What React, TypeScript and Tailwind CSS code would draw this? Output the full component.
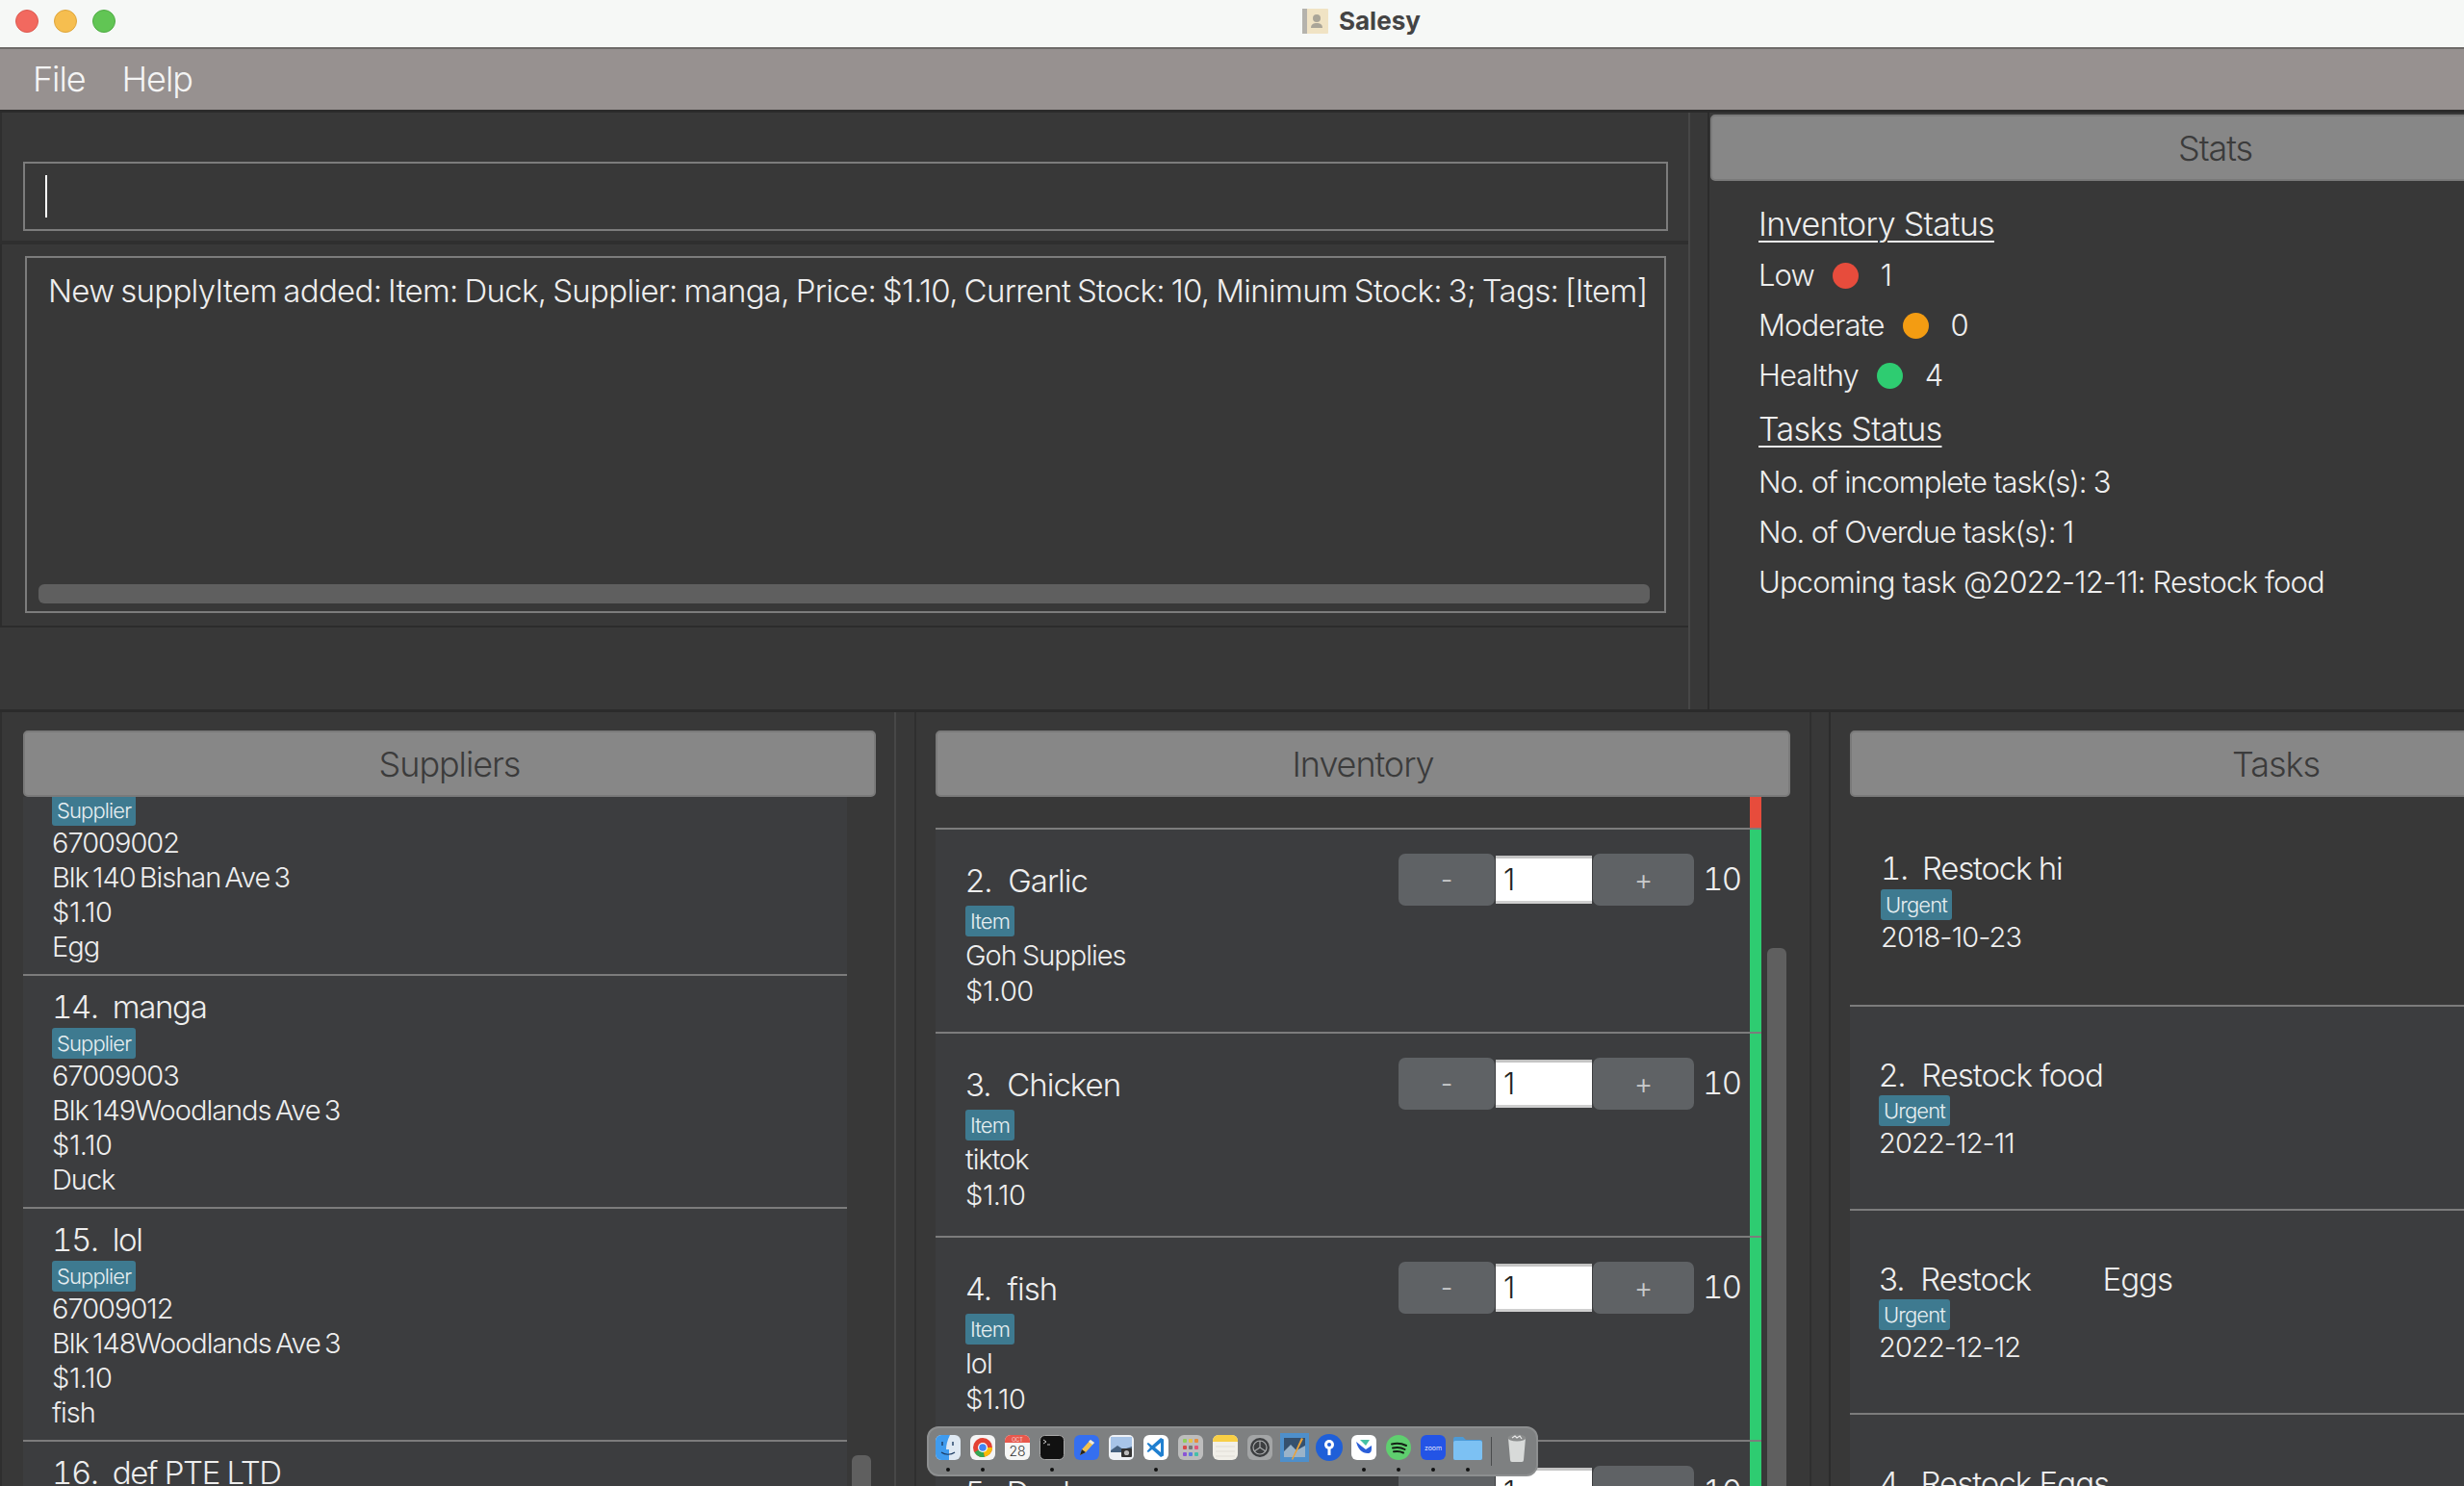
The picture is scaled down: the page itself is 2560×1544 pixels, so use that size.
const suppliers = [
  { no: "", name: "", phone: "67009002", addr: "Blk 140 Bishan Ave 3", price: "$1.10", item: "Egg" },
  { no: "14.", name: "manga", phone: "67009003", addr: "Blk 149Woodlands Ave 3", price: "$1.10", item: "Duck" },
  { no: "15.", name: "lol", phone: "67009012", addr: "Blk 148Woodlands Ave 3", price: "$1.10", item: "fish" },
  { no: "16.", name: "def PTE LTD", phone: "", addr: "", price: "", item: "" },
];

const items = [
  { no: "2.", name: "Garlic", supplier: "Goh Supplies", price: "$1.00" },
  { no: "3.", name: "Chicken", supplier: "tiktok", price: "$1.10" },
  { no: "4.", name: "fish", supplier: "lol", price: "$1.10" },
  { no: "5.", name: "Duck", supplier: "manga", price: "$1.10" },
];

const tasks = [
  { title: "2.  Restock food", date: "2022-12-11" },
  { title: "3.  Restock         Eggs", date: "2022-12-12" },
  { title: "4.  Restock Eggs", date: "2022-12-13" },
];

function Tag({ label }: { label: string }) {
  return (
    <div className="flex h-[32px] w-fit items-center rounded-[3px] bg-[#3e7a90] px-[5px] text-[22px] leading-none tracking-[-0.04em] text-[#e6eef0]">
      {label}
    </div>
  );
}

function PanelHeader({ title, className }: { title: string; className: string }) {
  return (
    <div className={`flex h-[69px] shrink-0 items-center justify-center rounded-[5px] border-2 border-[#7a7a7a] bg-[#878787] text-[36px] tracking-[-0.03em] text-[#3b3b3b] ${className}`}>
      {title}
    </div>
  );
}

function SupplierRow({ s }: { s: (typeof suppliers)[number] }) {
  return (
    <div className="h-[242px] border-b-2 border-[#7c7c7c] bg-[#3c3d3f] pt-[12px] pl-[30px]">
      <div className="h-[40px] text-[33px] leading-[40px] tracking-[-0.04em] tabular-nums whitespace-pre">
        {s.no}  {s.name}
      </div>
      <div className="mt-[2px]">
        <Tag label="Supplier" />
      </div>
      <div className="text-[29px] leading-[36px] tracking-[-0.035em]">
        <div className="h-[36px]">{s.phone}</div>
        <div className="h-[36px] [word-spacing:-3px]">{s.addr}</div>
        <div className="h-[36px] tracking-[-0.015em]">{s.price}</div>
        <div className="h-[36px]">{s.item}</div>
      </div>
    </div>
  );
}

function Stepper() {
  return (
    <div className="flex h-[54px] items-center text-[#c9cbcc]">
      <div className="flex h-[54px] w-[100px] items-center justify-center rounded-[7px] bg-[#5f6265] text-[28px]">-</div>
      <div className="mx-[1px] flex h-[50px] w-[100px] items-center border-y-[3px] border-t-[#c4c4c4] border-b-[#cfcfcf] bg-white pl-[8px] text-[31px] text-[#222]">
        1
      </div>
      <div className="flex h-[54px] w-[105px] items-center justify-center rounded-[7px] bg-[#5f6265] text-[30px]">+</div>
    </div>
  );
}

function ItemRow({ it }: { it: (typeof items)[number] }) {
  return (
    <div className="flex h-[212px] border-b-2 border-[#7c7c7c] bg-[#3c3d3f]">
      <div className="relative flex flex-1 justify-between pl-[31px]">
        <div className="pt-[33px]">
          <div className="h-[40px] text-[33px] leading-[40px] tracking-[-0.03em] whitespace-pre">
            {it.no}  {it.name}
          </div>
          <div className="mt-[6px]">
            <Tag label="Item" />
          </div>
          <div className="mt-[1px] text-[29px] leading-[37px] tracking-[-0.035em]">
            <div className="h-[37px] [word-spacing:-1px]">{it.supplier}</div>
            <div className="h-[37px] tracking-[-0.015em]">{it.price}</div>
          </div>
        </div>
        <div className="mt-[25px] flex h-[54px] items-center pr-[10px]">
          <Stepper />
          <div className="ml-[9px] w-[39px] text-[33px] tracking-[-0.05em] tabular-nums">10</div>
        </div>
      </div>
      <div className="w-[12px] shrink-0 bg-[#2ecc71]" />
    </div>
  );
}

function TaskRow({ title, date }: { title: string; date: string }) {
  return (
    <div className="h-[212px] border-b-2 border-[#7c7c7c] bg-[#3c3d3f] pt-[51px] pl-[30px]">
      <div className="h-[40px] text-[33px] leading-[40px] tracking-[-0.03em] whitespace-pre">{title}</div>
      <div className="mt-[1px]">
        <Tag label="Urgent" />
      </div>
      <div className="h-[36px] text-[29px] leading-[36px] tracking-[-0.03em]">{date}</div>
    </div>
  );
}

function StatLine({ label, value, color }: { label: string; value: string; color: string }) {
  return (
    <div className="flex h-[52px] items-center text-[31px] tracking-[-0.03em]">
      <span>{label}</span>
      <span className={`mr-[21px] ml-[19px] h-[27px] w-[27px] rounded-full ${color}`} />
      <span className="ml-[2px]">{value}</span>
    </div>
  );
}

const dockIcons = [
  { dot: true, icon: (
    <svg viewBox="0 0 26 26" className="h-[26px] w-[26px]">
      <rect width="26" height="26" rx="6" fill="#dfe9f3" />
      <path d="M0 6a6 6 0 0 1 6-6h9c-3 6-4 11-4 15h3v11H6a6 6 0 0 1-6-6z" fill="#3f9bee" />
      <path d="M6 18c4 3 10 3 14 0" stroke="#1d3c63" strokeWidth="1.2" fill="none" />
      <path d="M7 7v4M18 7v4" stroke="#1d3c63" strokeWidth="1.4" />
    </svg>
  ) },
  { dot: true, icon: (
    <svg viewBox="0 0 26 26" className="h-[26px] w-[26px]">
      <rect width="26" height="26" rx="6" fill="#f4f4f4" />
      <circle cx="13" cy="13" r="10" fill="#e34234" />
      <path d="M13 13 4.500 18A10 10 0 0 0 15 22.800z" fill="#34a853" />
      <path d="M13 13h10A10 10 0 0 1 15 22.800z" fill="#fbbc05" />
      <circle cx="13" cy="13" r="5" fill="#fff" />
      <circle cx="13" cy="13" r="3.800" fill="#4285f4" />
    </svg>
  ) },
  { dot: false, icon: (
    <svg viewBox="0 0 26 26" className="h-[26px] w-[26px]">
      <rect width="26" height="26" rx="6" fill="#f6f6f6" />
      <path d="M0 8V6a6 6 0 0 1 6-6h14a6 6 0 0 1 6 6v2z" fill="#e8584d" />
      <text x="13" y="6.500" textAnchor="middle" fontSize="5.500" fill="#fff" fontFamily="Inter, sans-serif">OCT</text>
      <text x="13" y="21.500" textAnchor="middle" fontSize="14" fill="#333" fontFamily="Inter, sans-serif">28</text>
    </svg>
  ) },
  { dot: true, icon: (
    <svg viewBox="0 0 26 26" className="h-[26px] w-[26px]">
      <rect x="0.500" y="0.500" width="25" height="25" rx="5" fill="#111" stroke="#a8a8a8" />
      <path d="M4 5l3 2-3 2M8 10h3" stroke="#ddd" strokeWidth="0.900" fill="none" />
    </svg>
  ) },
  { dot: false, icon: (
    <svg viewBox="0 0 26 26" className="h-[26px] w-[26px]">
      <rect width="26" height="26" rx="6" fill="#356ff0" />
      <path d="M6 21l2-6 9-10 4 3-9 10z" fill="#f2c14e" />
      <path d="M15 7l4 3 2-2-4-3z" fill="#e8e8e8" />
      <path d="M6 21l2-6 4 3z" fill="#222" />
    </svg>
  ) },
  { dot: false, icon: (
    <svg viewBox="0 0 26 26" className="h-[26px] w-[26px]">
      <rect width="26" height="26" rx="5" fill="#eef1f5" />
      <rect x="2" y="2" width="22" height="14" fill="#a7c4e8" />
      <path d="M2 16l7-5 6 4 9-3v6H2z" fill="#46617f" />
      <rect x="13" y="14" width="11" height="9" rx="1" fill="#333" />
      <circle cx="18.500" cy="18.500" r="2.600" fill="#bbb" />
    </svg>
  ) },
  { dot: true, icon: (
    <svg viewBox="0 0 26 26" className="h-[26px] w-[26px]">
      <rect width="26" height="26" rx="6" fill="#fff" />
      <path d="M18 3l3 1.500v17L18 23 9 15l-4 3-1.500-1L7 13 3.500 9 5 8l4 3z" fill="#1f7fd0" />
      <path d="M18 8l-6 5 6 5z" fill="#fff" />
    </svg>
  ) },
  { dot: false, icon: (
    <svg viewBox="0 0 26 26" className="h-[26px] w-[26px]">
      <rect width="26" height="26" rx="6" fill="#bdbdbd" />
      <rect x="5" y="4" width="4" height="4" rx="1" fill="#8fcf5a" />
      <rect x="11" y="4" width="4" height="4" rx="1" fill="#e6c14a" />
      <rect x="17" y="4" width="4" height="4" rx="1" fill="#e88e3c" />
      <rect x="5" y="11" width="4" height="4" rx="1" fill="#d94a4a" />
      <rect x="11" y="11" width="4" height="4" rx="1" fill="#777" />
      <rect x="17" y="11" width="4" height="4" rx="1" fill="#e2557b" />
      <rect x="5" y="18" width="4" height="4" rx="1" fill="#8a55d6" />
      <rect x="11" y="18" width="4" height="4" rx="1" fill="#5a7de0" />
      <rect x="17" y="18" width="4" height="4" rx="1" fill="#45c0a8" />
    </svg>
  ) },
  { dot: false, icon: (
    <svg viewBox="0 0 26 26" className="h-[26px] w-[26px]">
      <rect width="26" height="26" rx="6" fill="#f1efe8" />
      <path d="M0 7V6a6 6 0 0 1 6-6h14a6 6 0 0 1 6 6v1z" fill="#f8cf45" />
      <path d="M3 12h20M3 17h20M3 22h20" stroke="#d8d6cd" strokeWidth="0.700" />
    </svg>
  ) },
  { dot: false, icon: (
    <svg viewBox="0 0 26 26" className="h-[26px] w-[26px]">
      <rect width="26" height="26" rx="6" fill="#a3a5a6" />
      <circle cx="13" cy="13" r="10" fill="#3c3e40" />
      <circle cx="13" cy="13" r="7" fill="none" stroke="#a9abac" strokeWidth="1.200" />
      <path d="M13 6v7l6 4M13 13l-6 4" stroke="#a9abac" strokeWidth="1.200" fill="none" />
    </svg>
  ) },
  { dot: false, icon: (
    <svg viewBox="0 0 30 30" className="-mx-[2px] -my-[2px] h-[30px] w-[30px]">
      <rect width="30" height="30" fill="#4e8fcb" />
      <rect x="4" y="5" width="22" height="20" fill="#35506e" />
      <path d="M4 19l7-7 6 6 9-5v12H4z" fill="#9ab3c9" />
      <path d="M24 6L13 28l-1-1L22 5z" fill="#e9a23b" />
    </svg>
  ) },
  { dot: false, icon: (
    <svg viewBox="0 0 28 28" className="-m-[1px] h-[28px] w-[28px]">
      <circle cx="14" cy="14" r="14" fill="#1f5fd8" />
      <circle cx="14" cy="11" r="5" fill="#fff" />
      <circle cx="14" cy="11" r="2" fill="#1f5fd8" />
      <rect x="12.500" y="14" width="3" height="8" fill="#fff" />
    </svg>
  ) },
  { dot: true, icon: (
    <svg viewBox="0 0 26 26" className="h-[26px] w-[26px]">
      <rect width="26" height="26" rx="6" fill="#fff" />
      <path d="M5 7c2 8 6 12 12 12 3 0 4-2 4-5v-3l-6 4c-3-2-6-5-10-8z" fill="#2b5fd9" />
      <path d="M9 5h10l-4 6z" fill="#45c1a4" />
    </svg>
  ) },
  { dot: true, icon: (
    <svg viewBox="0 0 26 26" className="h-[26px] w-[26px]">
      <circle cx="13" cy="13" r="13" fill="#5fcf6f" />
      <path d="M6 9.500c5-1.500 10-1 15 1.500M7 13.500c4-1 9-.6 12.500 1.500M8 17.300c3.500-.8 7-.4 10 1.200" stroke="#142016" strokeWidth="2" strokeLinecap="round" fill="none" />
    </svg>
  ) },
  { dot: true, icon: (
    <svg viewBox="0 0 26 26" className="h-[26px] w-[26px]">
      <rect width="26" height="26" rx="6" fill="#2354e6" />
      <text x="13" y="15.500" textAnchor="middle" fontSize="7" fill="#fff" fontFamily="Inter, sans-serif">zoom</text>
    </svg>
  ) },
  { dot: true, icon: (
    <svg viewBox="0 0 30 26" className="-mx-[2px] h-[26px] w-[30px]">
      <path d="M0 4a2 2 0 0 1 2-2h8l3 3h15a2 2 0 0 1 2 2v17a2 2 0 0 1-2 2H2a2 2 0 0 1-2-2z" fill="#4d9ad6" />
      <rect y="6" width="30" height="20" rx="2" fill="#7cc1f3" />
    </svg>
  ) },
];

function Dock() {
  return (
    <div className="absolute top-[1482px] left-[963px] flex h-[52px] w-[635px] rounded-[12px] border-2 border-[#8d8f90] bg-[#7e8081] pl-[2px]">
      {dockIcons.map((d, i) => (
        <div key={i} className="flex w-[36px] shrink-0 flex-col items-center pt-[7px]">
          <div className="flex h-[26px] w-[26px] items-center justify-center">{d.icon}</div>
          {d.dot && <div className="mt-[8px] h-[4px] w-[4px] rounded-full bg-[#111]" />}
        </div>
      ))}
      <div className="my-[9px] ml-[6px] w-[1px] bg-[#4a4c4d]" />
      <div className="ml-[15px] pt-[5px]">
        <svg viewBox="0 0 22 30" className="h-[30px] w-[22px]">
          <path d="M2 5h18l-2 23a2 2 0 0 1-2 2H6a2 2 0 0 1-2-2z" fill="#d8dad9" />
          <ellipse cx="11" cy="5" rx="9.500" ry="3.500" fill="#8a8c8c" />
          <path d="M6 5l3-2 2 2 3-2 2 3" stroke="#e8e8e8" strokeWidth="1.200" fill="none" />
        </svg>
      </div>
    </div>
  );
}

export default function App() {
  return (
    <div className="relative flex h-[1544px] w-[2560px] flex-col overflow-hidden bg-[#383838] [font-family:Inter,sans-serif] font-light text-[#eeeeee]">
      <div className="flex h-[51px] shrink-0 items-center border-b-2 border-[#6d6a68] bg-[#f6f8f6] pb-[6px] pl-[16px]">
        <div className="flex gap-[16px]">
          <span className="h-[24px] w-[24px] rounded-full border border-[#dc5a50] bg-[#f2695f]" />
          <span className="h-[24px] w-[24px] rounded-full border border-[#dea63c] bg-[#f6be4f]" />
          <span className="h-[24px] w-[24px] rounded-full border border-[#50ac45] bg-[#61c554]" />
        </div>
        <svg viewBox="0 0 27 26" className="ml-[1233px] h-[26px] w-[27px]">
          <rect width="27" height="26" rx="1" fill="#f0e3c4" />
          <rect width="5" height="26" fill="#b5b3ad" />
          <circle cx="15" cy="10" r="4" fill="#aaa598" />
          <path d="M9 20c0-4 3-5 6-5s6 1 6 5z" fill="#aaa598" />
        </svg>
        <div className="ml-[11px] text-[26px] font-bold text-[#444444]">Salesy</div>
      </div>

      <div className="flex h-[63px] shrink-0 items-center gap-[38px] bg-[#979190] pb-[2px] pl-[34px] text-[36px] tracking-[-0.03em] text-[#f4f4f4]">
        <span>File</span>
        <span>Help</span>
      </div>

      <div className="flex h-[623px] shrink-0 border-t-[3px] border-[#2b2b2b]">
        <div className="flex w-[1756px] shrink-0 flex-col border-r-2 border-[#474747]">
          <div className="h-[137px] shrink-0 border-b-4 border-l-2 border-[#2f2f2f] pt-[51px] pl-[22px]">
            <div className="flex h-[72px] w-[1709px] items-center border-2 border-[#7c7c7c] pl-[21px]">
              <div className="h-[44px] w-[2px] bg-white" />
            </div>
          </div>
          <div className="h-[398px] shrink-0 border-b-2 border-l-2 border-[#2c2c2c] pt-[12px] pl-[24px]">
            <div className="relative h-[371px] w-[1705px] border-2 border-[#7c7c7c] pt-[14px] pl-[22px] text-[33px] leading-[40px] tracking-[-0.021em] whitespace-nowrap [word-spacing:-1.8px]">
              New supplyItem added: Item: Duck, Supplier: manga, Price: $1.10, Current Stock: 10, Minimum Stock: 3; Tags: [Item]
              <div className="absolute bottom-[8px] left-[12px] h-[20px] w-[1674px] rounded-[6px] bg-[#5f5f5f]" />
            </div>
          </div>
        </div>
        <div className="ml-[18px] flex w-[1052px] shrink-0 flex-col border-l-2 border-[#2c2c2c] pl-[1px]">
          <PanelHeader title="Stats" className="mt-[2px] w-full" />
          <div className="pt-[18px] pl-[50px]">
            <div className="h-[54px] text-[34px] leading-[54px] tracking-[-0.02em] underline decoration-2 underline-offset-[5px]">Inventory Status</div>
            <StatLine label="Low" value="1" color="bg-[#e74c3c]" />
            <StatLine label="Moderate" value="0" color="bg-[#f39c12]" />
            <StatLine label="Healthy" value="4" color="bg-[#2ecc71]" />
            <div className="mt-[1px] h-[58px] text-[34px] leading-[58px] tracking-[-0.02em] underline decoration-2 underline-offset-[5px]">Tasks Status</div>
            <div className="h-[52px] text-[31px] leading-[52px] tracking-[-0.037em]">No. of incomplete task(s): 3</div>
            <div className="h-[52px] text-[31px] leading-[52px] tracking-[-0.037em]">No. of Overdue task(s): 1</div>
            <div className="h-[52px] text-[31px] leading-[52px] tracking-[-0.027em]">Upcoming task @2022-12-11: Restock food</div>
          </div>
        </div>
      </div>

      <div className="flex flex-1 border-t-[3px] border-[#2b2b2b]">
        <div className="flex w-[931px] shrink-0 flex-col overflow-hidden border-r-2 border-l-2 border-r-[#474747] border-l-[#2f2f2f] pt-[19px] pl-[22px]">
          <PanelHeader title="Suppliers" className="w-[886px]" />
          <div className="relative flex-1 overflow-hidden">
            <div className="-mt-[56px] w-[856px]">
              {suppliers.map((s, i) => (
                <SupplierRow key={i} s={s} />
              ))}
            </div>
            <div className="absolute top-[684px] left-[861px] h-[100px] w-[20px] rounded-[6px] bg-[#5f5f5f]" />
          </div>
        </div>

        <div className="ml-[19px] flex w-[932px] shrink-0 flex-col overflow-hidden border-x-2 border-x-[#2f2f2f] pt-[19px] pl-[20px]">
          <PanelHeader title="Inventory" className="w-[888px]" />
          <div className="flex flex-1 overflow-hidden">
            <div className="w-[858px] shrink-0">
              <div className="flex h-[34px] border-b-2 border-[#7c7c7c] bg-[#383838]">
                <div className="flex-1" />
                <div className="w-[12px] bg-[#e74c3c]" />
              </div>
              {items.map((it) => (
                <ItemRow key={it.no} it={it} />
              ))}
            </div>
            <div className="mt-[157px] ml-[6px] h-[800px] w-[20px] rounded-[6px] bg-[#5f5f5f]" />
          </div>
        </div>

        <div className="ml-[18px] flex flex-1 flex-col overflow-hidden border-l-2 border-[#2c2c2c] pt-[19px] pl-[20px]">
          <PanelHeader title="Tasks" className="w-[885px]" />
          <div className="w-[885px] overflow-hidden">
            <div className="h-[218px] border-b-2 border-[#7c7c7c] bg-[#383838] pt-[54px] pl-[32px]">
              <div className="h-[40px] text-[33px] leading-[40px] tracking-[-0.037em] tabular-nums whitespace-pre">1.  Restock hi</div>
              <div className="mt-[2px]">
                <Tag label="Urgent" />
              </div>
              <div className="h-[36px] text-[29px] leading-[36px] tracking-[-0.03em]">2018-10-23</div>
            </div>
            {tasks.map((t) => (
              <TaskRow key={t.date} title={t.title} date={t.date} />
            ))}
          </div>
        </div>
      </div>

      <Dock />
    </div>
  );
}
